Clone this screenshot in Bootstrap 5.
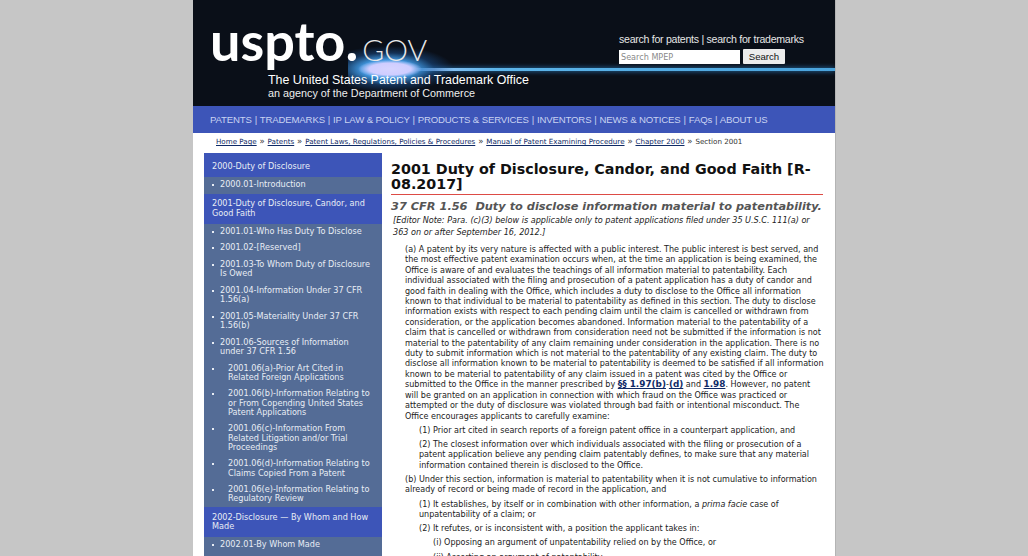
<!DOCTYPE html>
<html lang="en"><head><meta charset="utf-8"><title>MPEP 2001</title>
<link rel="stylesheet" href="https://cdn.jsdelivr.net/npm/bootstrap@5.3.0/dist/css/bootstrap.min.css">
<style>
html,body{height:556px;overflow:hidden}
body{background:#c6c6c6;font-family:"DejaVu Sans",Verdana,sans-serif;color:#222;font-size:8.1px;line-height:10.4px}
.sheet{width:642px;height:556px;overflow:hidden;background:#fff;box-shadow:1px 0 0 #b4b4b4}
.masthead{height:106px;background:#0a0f18;position:relative;overflow:hidden}
.beam{position:absolute;left:190px;right:0;top:68px;height:3px;background:linear-gradient(90deg,#bcd0ff,#5db5ea 25%,#4aa3dc 100%);box-shadow:0 0 5px #2d7fc0}
.flare{position:absolute;left:155px;top:44px;width:125px;height:50px;background:radial-gradient(ellipse 32px 9px at 42px 25px,#d6d4ff 0,#cfcdff 65%,rgba(90,180,240,0) 100%),radial-gradient(ellipse 66px 23px at 40px 25px,#5cb8f2 0,#3f95dc 40%,rgba(30,90,160,.45) 70%,rgba(10,15,24,0) 100%)}
.logo{position:absolute;left:17px;top:11px;color:#fff;font-family:Lato,"Liberation Sans",sans-serif;font-size:54px;line-height:60px;font-weight:700;white-space:nowrap}
.logo-gov{font-size:30px;font-weight:300;color:#e8e8e8;margin-left:4px}
.agency{position:absolute;left:75px;top:74px;color:#fff;font-family:"Liberation Sans",sans-serif;font-size:12.4px;line-height:13px;white-space:nowrap}
.agency-sub{font-size:10.8px;line-height:12px;display:block;color:#eee}
.finder{position:absolute;left:426px;top:33px;font-family:"Liberation Sans",sans-serif;color:#e6e6e6;font-size:10.6px;letter-spacing:-.28px;line-height:13px;white-space:nowrap}
.finder-row{margin-top:3px;letter-spacing:0}
.finder-input{width:121px;height:14px;margin-top:1px;background:#fff;color:#8a8a8a;font:8.1px/14px "DejaVu Sans",sans-serif;padding-left:2px}
.finder-btn{width:42px;height:15px;background:#ececec;color:#111;font:9.6px/15px "Liberation Sans",sans-serif;text-align:center;margin-left:3px;border-radius:1px}
.mainnav{height:27px;background:#3d55b8;color:#c9d3f2;font-family:"Liberation Sans",sans-serif;font-size:9.6px;letter-spacing:-.15px;line-height:27px;padding-left:17px;white-space:nowrap}
.navsep{margin:0 .4px}
.crumbs{height:20px;padding-left:23px;font-size:7.15px;line-height:17px;white-space:nowrap;color:#333}
.crumbs b{font-weight:400;font-size:8.5px;margin:0 .6px}
.crumbs a,.rule-link{color:#0f2a66}
.rule-link{font-size:8.85px;line-height:1}
.sidebar{width:178px;margin-left:11px;flex:none;background:#546c96;color:#e8edf5;font-size:8.15px;line-height:9.5px}
.side-head{background:#3d55b8;padding:5.5px 8px}
.side-head-one{height:24px;padding-top:9px}
.side-item{padding:3px 10px 4px 16px;position:relative}
.side-item::before{content:"";position:absolute;left:8px;top:7px;width:2px;height:2px;background:#e8edf5}
.side-sub{padding:3px 10px 3.5px 24px}
.article{width:432px;margin-left:9px;padding-top:9px;flex:none}
.doc-title{font-size:14.3px;line-height:15px;font-weight:700;color:#111;margin:0;padding-bottom:2px;border-bottom:1px solid #dd4b45}
.rule-title{font-size:11.35px;line-height:14px;font-weight:700;font-style:italic;color:#555;margin:4px 0 2px;white-space:pre}
.note{font-style:italic;padding-left:2px;margin:0 0 6.6px;line-height:11.7px}
.para{margin:0 -2px 3.8px 14px;font-size:8.05px}
.lvl2{margin-left:28px}
.lvl3{margin-left:42px}
</style></head><body>
<div class="d-flex justify-content-center">
<div class="sheet">
 <div class="masthead">
  <div class="beam"></div><div class="flare"></div>
  <div class="logo">uspto.<span class="logo-gov">GOV</span></div>
  <div class="agency">The United States Patent and Trademark Office<span class="agency-sub">an agency of the Department of Commerce</span></div>
  <div class="finder"><div>search for patents | search for trademarks</div>
   <div class="d-flex finder-row"><div class="finder-input">Search MPEP</div><div class="finder-btn">Search</div></div></div>
 </div>
 <div class="mainnav">PATENTS <span class="navsep">|</span> TRADEMARKS <span class="navsep">|</span> IP LAW &amp; POLICY <span class="navsep">|</span> PRODUCTS &amp; SERVICES <span class="navsep">|</span> INVENTORS <span class="navsep">|</span> NEWS &amp; NOTICES <span class="navsep">|</span> FAQs <span class="navsep">|</span> ABOUT US</div>
 <div class="crumbs"><a href="#">Home Page</a> <b>»</b> <a href="#">Patents</a> <b>»</b> <a href="#">Patent Laws, Regulations, Policies &amp; Procedures</a> <b>»</b> <a href="#">Manual of Patent Examining Procedure</a> <b>»</b> <a href="#">Chapter 2000</a> <b>»</b> Section 2001</div>
 <div class="d-flex">
  <div class="sidebar">
   <div class="side-head side-head-one">2000-Duty of Disclosure</div>
   <div class="side-item">2000.01-Introduction</div>
   <div class="side-head">2001-Duty of Disclosure, Candor, and Good Faith</div>
   <div class="side-item">2001.01-Who Has Duty To Disclose</div>
   <div class="side-item">2001.02-[Reserved]</div>
   <div class="side-item">2001.03-To Whom Duty of Disclosure Is Owed</div>
   <div class="side-item">2001.04-Information Under 37 CFR 1.56(a)</div>
   <div class="side-item">2001.05-Materiality Under 37 CFR 1.56(b)</div>
   <div class="side-item">2001.06-Sources of Information under 37 CFR 1.56</div>
   <div class="side-item side-sub">2001.06(a)-Prior Art Cited in Related Foreign Applications</div>
   <div class="side-item side-sub">2001.06(b)-Information Relating to or From Copending United States Patent Applications</div>
   <div class="side-item side-sub">2001.06(c)-Information From Related Litigation and/or Trial Proceedings</div>
   <div class="side-item side-sub">2001.06(d)-Information Relating to Claims Copied From a Patent</div>
   <div class="side-item side-sub">2001.06(e)-Information Relating to Regulatory Review</div>
   <div class="side-head">2002-Disclosure — By Whom and How Made</div>
   <div class="side-item">2002.01-By Whom Made</div>
   <div class="side-item">&nbsp;</div>
  </div>
  <div class="article">
   <h1 class="doc-title">2001 Duty of Disclosure, Candor, and Good Faith [R-08.2017]</h1>
   <div class="rule-title">37 CFR 1.56  Duty to disclose information material to patentability.</div>
   <p class="note">[Editor Note: Para. (c)(3) below is applicable only to patent applications filed under 35 U.S.C. 111(a) or 363 on or after September 16, 2012.]</p>
   <p class="para">(a) A patent by its very nature is affected with a public interest. The public interest is best served, and the most effective patent examination occurs when, at the time an application is being examined, the Office is aware of and evaluates the teachings of all information material to patentability. Each individual associated with the filing and prosecution of a patent application has a duty of candor and good faith in dealing with the Office, which includes a duty to disclose to the Office all information known to that individual to be material to patentability as defined in this section. The duty to disclose information exists with respect to each pending claim until the claim is cancelled or withdrawn from consideration, or the application becomes abandoned. Information material to the patentability of a claim that is cancelled or withdrawn from consideration need not be submitted if the information is not material to the patentability of any claim remaining under consideration in the application. There is no duty to submit information which is not material to the patentability of any existing claim. The duty to disclose all information known to be material to patentability is deemed to be satisfied if all information known to be material to patentability of any claim issued in a patent was cited by the Office or submitted to the Office in the manner prescribed by <a class="rule-link fw-bold" href="#">§§ 1.97(b)</a>-<a class="rule-link fw-bold" href="#">(d)</a> and <a class="rule-link fw-bold" href="#">1.98</a>. However, no patent will be granted on an application in connection with which fraud on the Office was practiced or attempted or the duty of disclosure was violated through bad faith or intentional misconduct. The Office encourages applicants to carefully examine:</p>
   <p class="para lvl2">(1) Prior art cited in search reports of a foreign patent office in a counterpart application, and</p>
   <p class="para lvl2">(2) The closest information over which individuals associated with the filing or prosecution of a patent application believe any pending claim patentably defines, to make sure that any material information contained therein is disclosed to the Office.</p>
   <p class="para">(b) Under this section, information is material to patentability when it is not cumulative to information already of record or being made of record in the application, and</p>
   <p class="para lvl2">(1) It establishes, by itself or in combination with other information, a <i>prima facie</i> case of unpatentability of a claim; or</p>
   <p class="para lvl2">(2) It refutes, or is inconsistent with, a position the applicant takes in:</p>
   <p class="para lvl3">(i) Opposing an argument of unpatentability relied on by the Office, or</p>
   <p class="para lvl3">(ii) Asserting an argument of patentability.</p>
  </div>
 </div>
</div></div>
<script src="https://cdn.jsdelivr.net/npm/bootstrap@5.3.0/dist/js/bootstrap.bundle.min.js"></script>
</body></html>
